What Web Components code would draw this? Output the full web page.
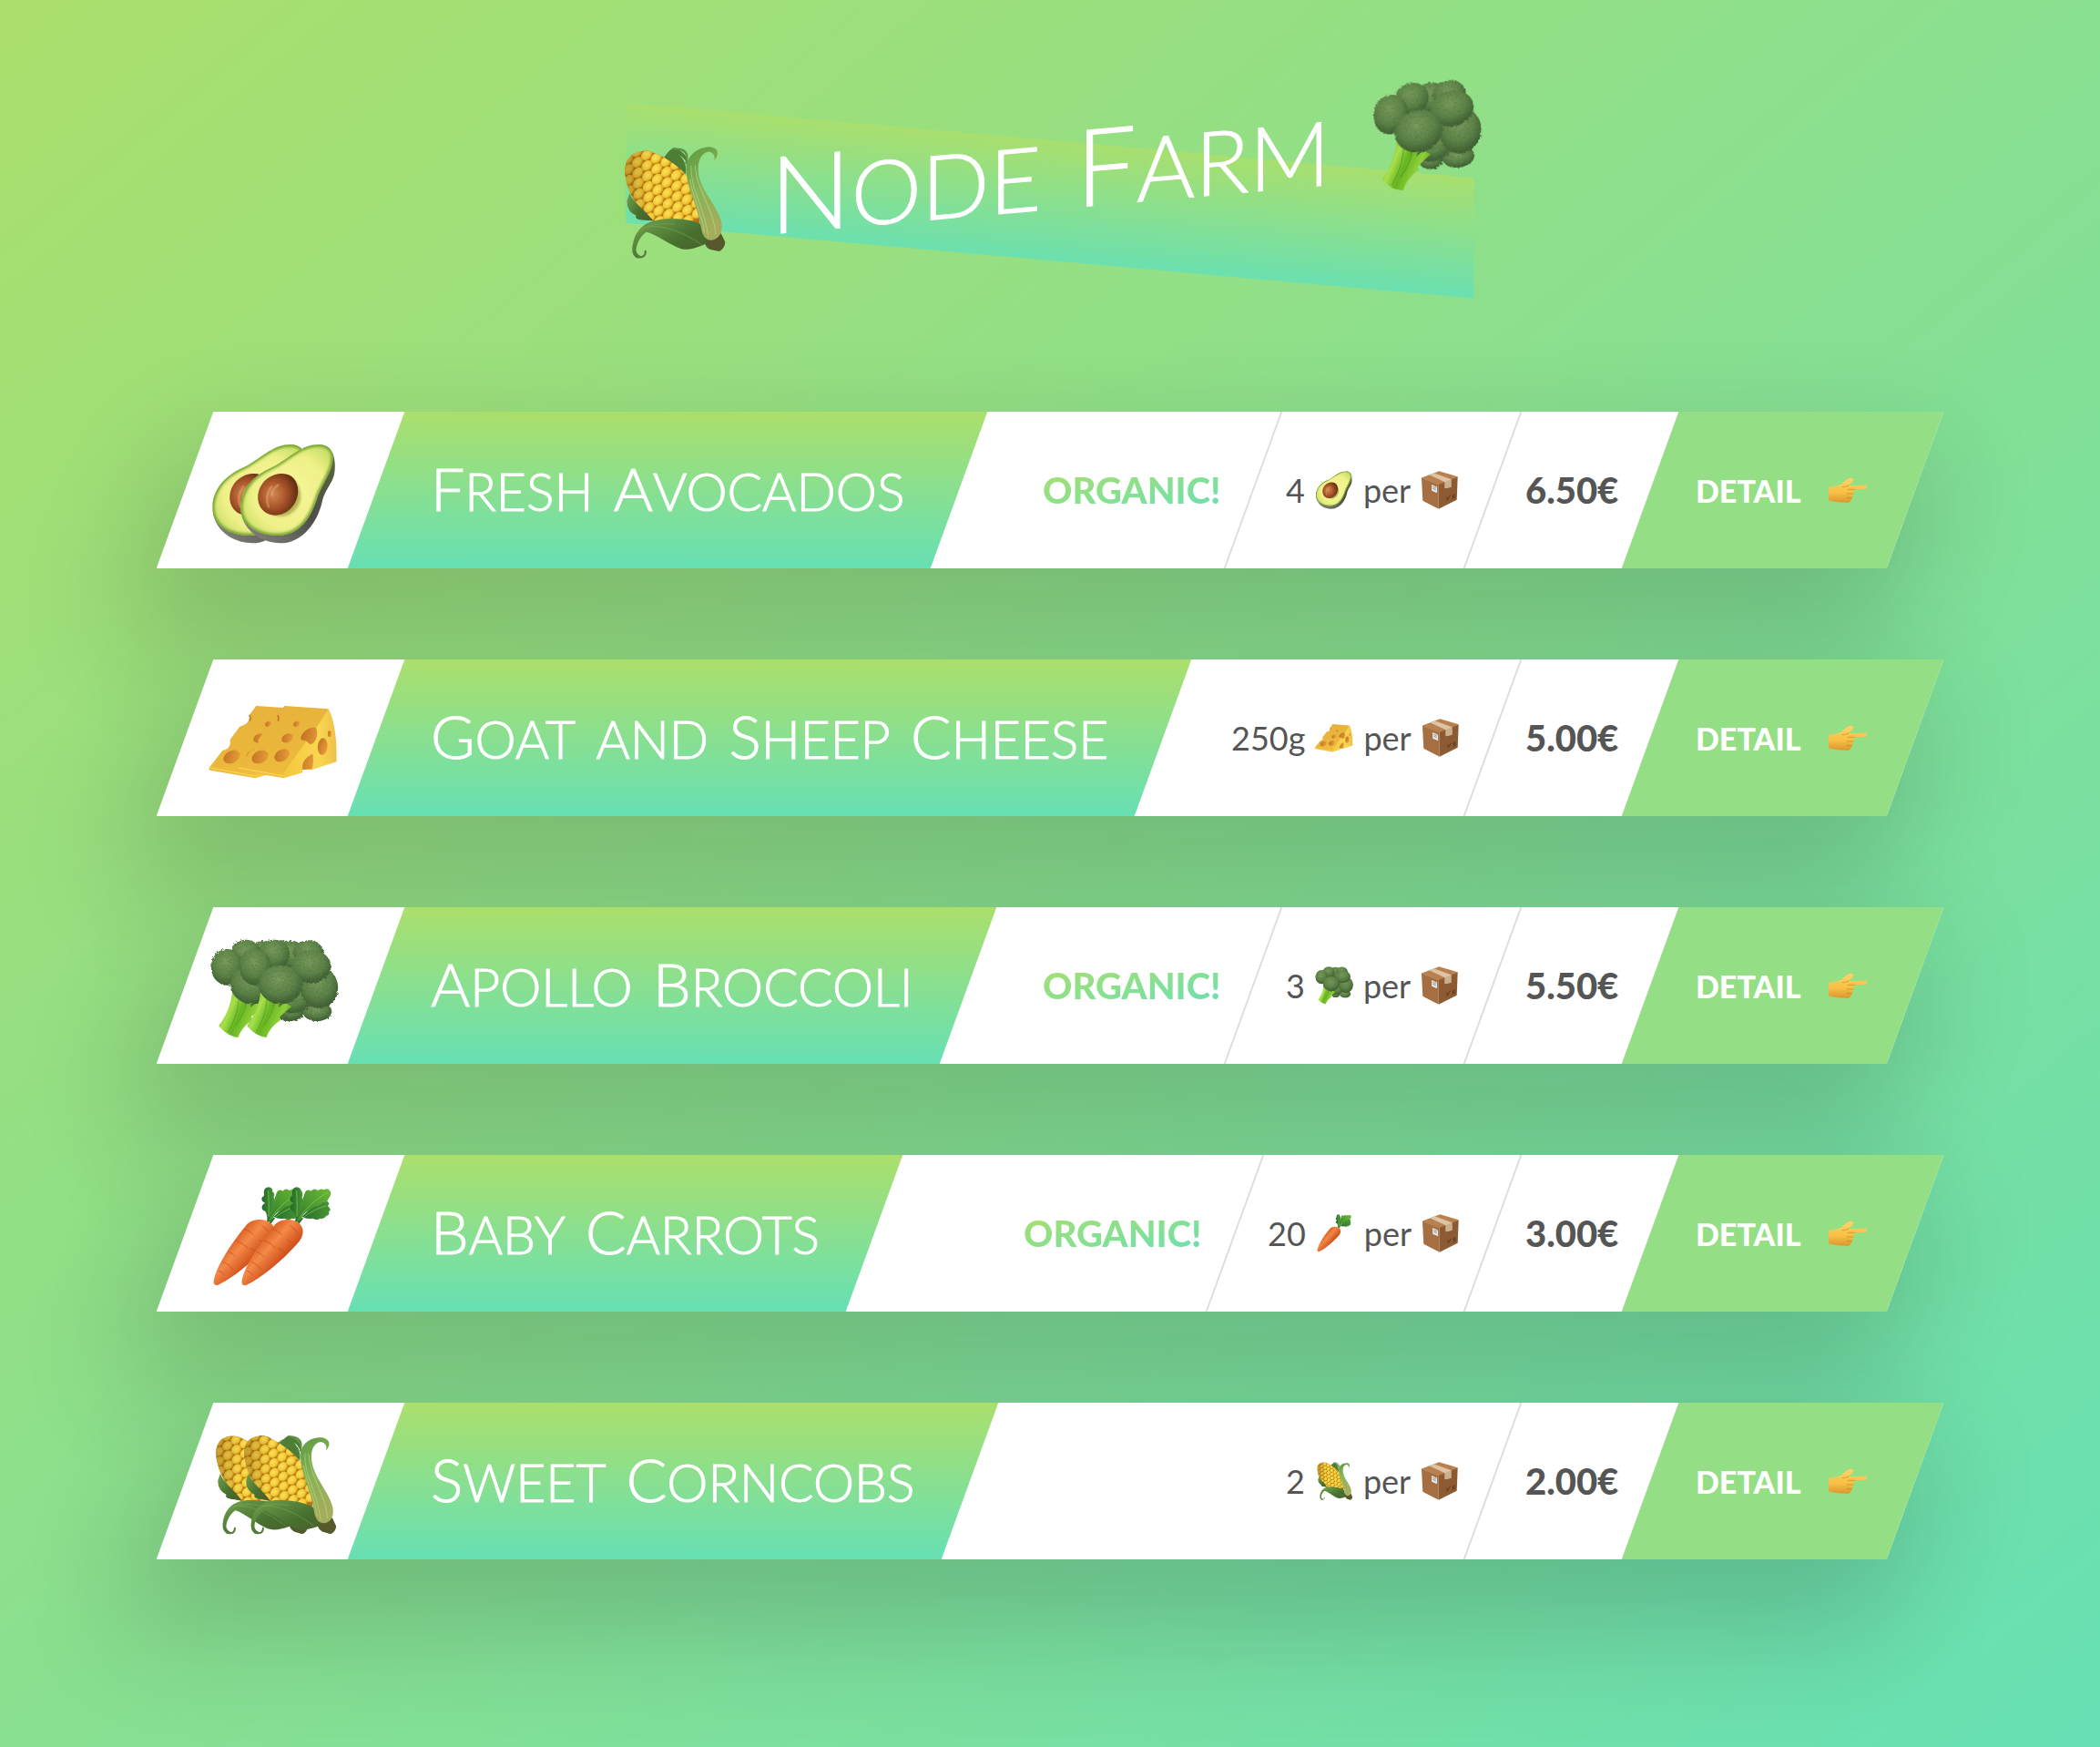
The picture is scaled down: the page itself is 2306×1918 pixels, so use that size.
<!DOCTYPE html>
<html lang="en">
<head>
<meta charset="utf-8">
<title>Node Farm</title>
<style>
  :root {
    --lime: #abdf6c;
    --mint: #67e0b4;
    --leaf: #94df86;
    --ink: #555;
  }
  body {
    margin: 0;
    min-height: 100vh;
    font-family: Lato, "Open Sans", sans-serif;
    font-size: 36px;
    color: var(--ink);
    background: linear-gradient(to bottom right, var(--lime), var(--mint));
  }
</style>
</head>
<body>
<farm-page>
  <farm-title slot="title"></farm-title>
  <product-card emoji="avocado" name="Fresh Avocados" quantity="4" price="6.50€" organic></product-card>
  <product-card emoji="cheese" name="Goat and Sheep Cheese" quantity="250g" price="5.00€"></product-card>
  <product-card emoji="broccoli" name="Apollo Broccoli" quantity="3" price="5.50€" organic></product-card>
  <product-card emoji="carrot" name="Baby Carrots" quantity="20" price="3.00€" organic></product-card>
  <product-card emoji="corn" name="Sweet Corncobs" quantity="2" price="2.00€"></product-card>
</farm-page>

<script>
const kernels = () => {
  let out = '';
  for (let r = -1; r < 11; r++) {
    for (let c = -1; c < 7; c++) {
      const u = c * 34 + (r % 2 ? 17 : 0) - 100, v = r * 27 - 135;
      const a = -35 * Math.PI / 180;
      const x = 262 + u * Math.cos(a) - v * Math.sin(a);
      const y = 165 + u * Math.sin(a) + v * Math.cos(a);
      out += `<ellipse cx="${x.toFixed(1)}" cy="${y.toFixed(1)}" rx="18" ry="15" transform="rotate(-38 ${x.toFixed(1)} ${y.toFixed(1)})" fill="url(#k)"/>`;
    }
  }
  return out;
};

const bump = (x, y, rx, ry) => `<ellipse cx="${x}" cy="${y}" rx="${rx}" ry="${ry}" fill="url(#b)"/>`;
const hole = (x, y, rx, ry, t) => `<ellipse cx="${x}" cy="${y}" rx="${rx}" ry="${ry}" transform="rotate(${t} ${x} ${y})" fill="url(#h)"/>`;

const EMOJI = {
  avocado: ['130 54 330 330', `
    <defs>
      <radialGradient id="f" gradientUnits="userSpaceOnUse" cx="300" cy="215" r="190"><stop offset="0" stop-color="#f8f79a"/><stop offset=".65" stop-color="#eef088"/><stop offset="1" stop-color="#c3dc62"/></radialGradient>
      <linearGradient id="s" x1="0" x2="1" y1="1" y2="0"><stop offset="0" stop-color="#8a8880"/><stop offset=".5" stop-color="#4f4d49"/><stop offset="1" stop-color="#5a6a3a"/></linearGradient>
      <radialGradient id="p" cx=".38" cy=".5" r=".62"><stop offset="0" stop-color="#d08a52"/><stop offset=".5" stop-color="#a9562a"/><stop offset="1" stop-color="#642c12"/></radialGradient>
      <filter id="o"><feGaussianBlur stdDeviation="5"/></filter>
      <clipPath id="c"><path d="M395 57C426 57 444 75 442 105C440 150 405 185 388 240C367 303 330 356 262 357C190 358 138 320 138 265C138 205 180 160 235 135C290 112 332 57 395 57Z"/></clipPath>
    </defs>
    <path fill="url(#s)" d="M400 58C440 62 452 95 448 145C444 185 417 200 406 248C390 315 340 382 270 382C200 380 152 340 140 285Z"/>
    <path fill="url(#f)" d="M395 57C426 57 444 75 442 105C440 150 405 185 388 240C367 303 330 356 262 357C190 358 138 320 138 265C138 205 180 160 235 135C290 112 332 57 395 57Z"/>
    <g clip-path="url(#c)"><path filter="url(#o)" fill="none" stroke="#6fa02f" stroke-width="13" d="M395 57C426 57 444 75 442 105C440 150 405 185 388 240C367 303 330 356 262 357C190 358 138 320 138 265C138 205 180 160 235 135C290 112 332 57 395 57Z"/>
    <ellipse filter="url(#o)" cx="270" cy="226" rx="66" ry="68" fill="#8c8a2c" opacity=".6"/></g>
    <path fill="url(#p)" d="M270 153C306 150 329 176 327 214C325 256 292 290 252 290C218 290 194 264 195 229C197 187 230 156 270 153Z"/>
    <path d="M240 196q-24 30-10 66M262 190q-20 14-22 34" fill="none" stroke="#f0b47c" stroke-width="8" opacity=".4" stroke-linecap="round"/>`],
  cheese: ['130 30 330 330', `
    <defs>
      <linearGradient id="t" x1=".3" y1="0" x2=".6" y2="1"><stop offset="0" stop-color="#e6b23c"/><stop offset=".6" stop-color="#eab73c"/><stop offset="1" stop-color="#f0bd3c"/></linearGradient>
      <linearGradient id="r" x1="0" x2="1"><stop offset="0" stop-color="#f3c53a"/><stop offset=".7" stop-color="#fad650"/><stop offset="1" stop-color="#eec04a"/></linearGradient>
      <linearGradient id="h" x1="0" x2="1" y1="0" y2=".5"><stop offset="0" stop-color="#bf6f20"/><stop offset="1" stop-color="#e49a38"/></linearGradient>
    </defs>
    <path fill="url(#r)" d="M427 88C446 120 457 190 454 262L374 288H342V298L280 316L262 300Z"/>
    <path fill="url(#t)" d="M282 78L427 88C400 140 330 225 280 304V316L130 290Q124 284 130 278L172 224C190 222 200 208 196 190L228 146C246 142 264 130 260 108Z"/>
    <path d="M427 89C400 140 330 225 281 304" fill="none" stroke="#f6cc50" stroke-width="3"/>
    <path d="M130 282L280 309" stroke="#f8d052" stroke-width="4"/>
    <path d="M260 108q6 10 1 20" stroke="#c47a26" stroke-width="5" fill="none"/>
    ${hole(322, 137, 11, 8, -38)}${hole(292, 184, 20, 14, -28)}${hole(274, 241, 27, 19, -32)}${hole(202, 246, 29, 20, -28)}
    ${hole(408, 212, 16, 28, 5)}${hole(431, 170, 6, 10, 0)}
    <path fill="url(#h)" d="M336 182C344 158 368 146 386 150C394 166 390 196 372 204C362 206 358 192 350 192C342 194 336 190 336 182ZM342 288V272C345 256 360 242 376 236Q380 260 374 286Z"/>`],
  broccoli: ['130 66 330 330', `
    <defs>
      <radialGradient id="b" cx=".45" cy=".35" r=".64"><stop offset="0" stop-color="#7a9c5c"/><stop offset=".6" stop-color="#5d8248"/><stop offset="1" stop-color="#3c5c31"/></radialGradient>
      <linearGradient id="m" x1="0" x2="1" y1=".2" y2=".7"><stop offset="0" stop-color="#5fae1f"/><stop offset=".3" stop-color="#a8e04c"/><stop offset=".5" stop-color="#66b422"/><stop offset=".75" stop-color="#8fd038"/><stop offset="1" stop-color="#4a9018"/></linearGradient>
      <filter id="x" x="-5%" y="-5%" width="110%" height="110%"><feTurbulence type="fractalNoise" baseFrequency=".16" numOctaves="2" result="n"/><feDisplacementMap in="SourceGraphic" in2="n" scale="12" result="d"/><feColorMatrix in="n" values="0 0 0 0 .08 0 0 0 0 .16 0 0 0 0 .05 1.4 0 0 0 -.6"/><feComposite in2="d" operator="in"/><feMerge><feMergeNode in="d"/><feMergeNode/></feMerge></filter>
    </defs>
    <g filter="url(#x)"><path fill="#3c5c31" d="M215 90L390 90L430 180L425 260L350 285L280 270L180 190Z"/>${bump(308, 302, 38, 32)}${bump(390, 304, 48, 32)}${bump(310, 262, 62, 48)}</g>
    <path fill="url(#m)" d="M204 226C204 280 180 325 159 352Q186 386 223 390C232 362 252 345 270 332L267 322L306 288L284 276L262 292L276 262L240 240Z"/>
    <path d="M225 262C222 310 205 345 190 372M250 272C246 300 232 330 214 350" fill="none" stroke="#3f8a14" stroke-width="3" opacity=".5"/>
    <g filter="url(#x)">${bump(305, 118, 54, 46)}${bump(362, 112, 50, 42)}${bump(397, 226, 62, 68)}${bump(370, 156, 66, 54)}${bump(248, 116, 52, 48)}${bump(186, 158, 52, 60)}${bump(270, 216, 72, 64)}</g>`],
  carrot: ['130 42 330 330', `
    <defs>
      <linearGradient id="a" gradientUnits="userSpaceOnUse" x1="205" y1="225" x2="270" y2="285"><stop offset="0" stop-color="#e0672a"/><stop offset=".35" stop-color="#f48a48"/><stop offset="1" stop-color="#cf4f1a"/></linearGradient>
      <linearGradient id="g" x1="0" x2="1" y1="1" y2="0"><stop offset="0" stop-color="#2f7a2a"/><stop offset="1" stop-color="#6cbb38"/></linearGradient>
      <linearGradient id="d" x1="0" x2="1"><stop offset="0" stop-color="#22672a"/><stop offset="1" stop-color="#4a9636"/></linearGradient>
    </defs>
    <path fill="url(#d)" d="M326 160C345 130 385 98 408 88Q424 84 430 98Q422 104 430 110Q438 118 428 124Q434 134 420 138Q412 150 400 146Q388 154 376 146Q356 150 340 140Z"/>
    <path fill="url(#g)" d="M324 156C332 120 340 90 350 60Q358 48 370 56Q380 44 392 54Q404 46 412 52Q428 44 434 58Q438 70 428 80Q424 94 408 94Q398 106 384 106Q366 118 352 126Q338 138 330 160Z"/>
    <path fill="url(#d)" d="M320 156C318 140 318 130 312 122Q298 118 302 104Q306 98 312 96Q296 88 302 76Q310 74 308 64Q306 46 322 43Q338 44 336 58Q346 64 340 76Q346 86 340 96Q344 108 334 118Q328 134 326 158Z"/>
    <path d="M323 154Q326 100 322 54M326 152Q360 98 424 60M330 156Q366 120 420 104" fill="none" stroke="#8ed055" stroke-width="3" opacity=".65"/>
    <path d="M318 162L326 140M327 164L342 144" stroke="#2a6f2c" stroke-width="6"/>
    <path fill="url(#a)" d="M142 353C148 312 190 240 250 168C266 148 306 144 328 160C350 176 348 206 324 230C270 290 205 342 156 366Q141 368 142 353Z"/>
    <path d="M242 180q20 8 32 20M300 168q16 12 26 26M214 218q26 10 40 26M262 244q14 6 24 16M190 256q16 6 24 16M172 288q20 8 34 26M158 318q12 4 20 14M290 216q12 6 20 14" fill="none" stroke="#c24a18" stroke-width="3" opacity=".65"/>`],
  corn: ['130 48 330 330', `
    <defs>
      <radialGradient id="k" cx=".45" cy=".38" r=".62"><stop offset="0" stop-color="#fce35a"/><stop offset=".65" stop-color="#f2c936"/><stop offset="1" stop-color="#c48a1c"/></radialGradient>
      <linearGradient id="q" x1="0" x2="1"><stop offset="0" stop-color="#5a2c00" stop-opacity=".4"/><stop offset=".35" stop-color="#5a2c00" stop-opacity="0"/></linearGradient>
      <linearGradient id="l" x1="0" x2=".3" y1="0" y2="1"><stop offset="0" stop-color="#5d9a3f"/><stop offset=".5" stop-color="#86b356"/><stop offset="1" stop-color="#a3ad5c"/></linearGradient>
      <linearGradient id="w" x1="0" x2="1" y1=".2" y2="1"><stop offset="0" stop-color="#6a9a48"/><stop offset=".5" stop-color="#46702f"/><stop offset="1" stop-color="#4d5a2a"/></linearGradient>
      <clipPath id="z"><path d="M150 112C148 68 180 46 222 54C290 82 345 135 376 200V294L240 272C190 232 154 172 150 112Z"/></clipPath>
    </defs>
    <path fill="#4e7d35" d="M264 86Q276 62 296 51C322 62 342 78 338 106Q334 88 314 74C334 96 336 116 333 134C312 112 290 96 264 86Z"/>
    <path d="M296 54Q334 56 337 78Q338 92 334 104" fill="none" stroke="#5e8f45" stroke-width="6"/>
    <g clip-path="url(#z)"><path fill="#b37416" d="M140 40h250v270h-250z"/>${kernels()}<path fill="url(#q)" d="M140 40h250v270h-250z"/></g>
    <path fill="url(#w)" d="M164 176C174 205 206 226 236 266L210 262Q176 258 184 246Q156 232 156 200Z"/>
    <path fill="url(#w)" d="M186 374Q168 364 173 335C180 290 210 264 262 264C320 264 366 276 384 294C400 316 430 330 452 352Q450 368 436 375L408 368Q396 362 392 350C370 358 342 366 320 358C280 340 240 304 214 298C192 312 182 340 184 354Q188 368 206 372Z"/>
    <path d="M186 371Q212 378 212 356" fill="none" stroke="#557d38" stroke-width="6" stroke-linecap="round"/>
    <path d="M210 284C260 276 330 310 380 350M190 300C206 280 240 272 300 282" fill="none" stroke="#84ac5a" stroke-width="3" opacity=".45"/>
    <path fill="#57592c" d="M398 346Q420 330 440 322L453 350Q448 370 434 375Q408 372 398 346Z"/>
    <path fill="url(#l)" d="M335 124C332 84 364 54 408 58C432 64 436 82 420 100Q424 78 404 72C378 74 368 100 372 136C380 190 424 230 440 282C448 312 438 338 412 340C388 338 382 316 378 290C366 226 338 176 335 124Z"/>
    <path d="M350 110C346 180 392 240 402 330M362 110C364 180 420 250 424 324M346 150C356 210 384 260 390 316" fill="none" stroke="#d3dd93" stroke-width="3" opacity=".5"/>`],
  box: ['476 47 128 128', `
    <path fill="#b9814f" d="M479 70L538 48L600 66L537 94Z"/>
    <path fill="#a56f41" d="M479 70L536 93V174L483 147Z"/>
    <path fill="#8c5a33" d="M600 66L536 93V174L597 144Z"/>
    <path fill="#dcc4a4" d="M504 60L520 54L578 75V101L557 106V84Z"/>
    <path fill="#c9b08e" d="M557 84L578 75V101L557 106Z"/>
    <path fill="#e9e6e2" d="M513 93L531 101V121L513 113Z"/>
    <path d="M517 100l10 4M517 106l10 4" stroke="#7f93a8" stroke-width="3"/>
    <path d="M561 134l6 6 8-11M565 139v6M584 127v14M589 124v14" fill="none" stroke="#5b371b" stroke-width="3"/>`],
  hand: ['530 40 132 132', `
    <defs><linearGradient id="y" x1="0" x2="0" y1="0" y2="1"><stop offset="0" stop-color="#ffd462"/><stop offset=".6" stop-color="#f6c048"/><stop offset="1" stop-color="#dd962c"/></linearGradient></defs>
    <path fill="url(#y)" d="M534 97C548 92 562 94 572 88C586 80 594 66 606 66Q616 66 614 76C610 82 602 86 598 91L655 90Q661 92 660 98Q659 103 652 103L618 104Q618 112 614 118Q614 128 609 132Q607 146 596 147L560 146Q546 140 535 142Q529 118 534 97Z"/>
    <path d="M598 91Q588 98 578 96M618 104L596 104M614 118L594 118M609 132L592 131" fill="none" stroke="#c98424" stroke-width="3" stroke-linecap="round" opacity=".7"/>`]
};

class FarmEmoji extends HTMLElement {
  connectedCallback() {
    const [box, art] = EMOJI[this.getAttribute('name')];
    this.attachShadow({ mode: 'open' }).innerHTML = `
      <style>
        :host { display: inline-block; width: var(--emoji, 42px); height: var(--emoji, 42px); flex: none; }
        svg { display: block; width: 100%; height: 100%; overflow: visible; }
      </style>
      <svg viewBox="${box}" aria-hidden="true">${art}</svg>`;
  }
}
customElements.define('farm-emoji', FarmEmoji);

/* Display lettering: tall initials over slightly shorter small capitals. */
class FarmLettering extends HTMLElement {
  connectedCallback() {
    const words = this.getAttribute('text').split(' ')
      .map(w => `<span class="${/^[A-Z]/.test(w) ? 'initial' : ''}">${w}</span>`).join(' ');
    this.attachShadow({ mode: 'open' }).innerHTML = `
      <style>
        :host { display: block; padding-bottom: 18px; white-space: nowrap; font-weight: 300; font-variant-caps: small-caps; font-size: var(--small, 82px); line-height: 1; color: #fff; -webkit-text-stroke: 1px #fff; }
        span { display: inline-block; }
        .initial::first-letter { font-size: var(--initial, 66px); }
      </style>${words}`;
  }
}
customElements.define('farm-lettering', FarmLettering);

class FarmTitle extends HTMLElement {
  connectedCallback() {
    this.attachShadow({ mode: 'open' }).innerHTML = `
      <style>
        :host { display: block; }
        h1 { position: relative; display: flex; align-items: center; justify-content: center; gap: 46px; height: 200px; margin: 0; transform: skewY(-5deg); --emoji: 120px; }
        h1::before { content: ""; position: absolute; z-index: -1; left: 50%; top: 50%; width: 49%; height: 132px; margin-top: 35px; transform: translate(-50%, -50%) skewY(10deg); background: linear-gradient(to bottom, var(--lime), var(--mint)); opacity: .9; }
        farm-lettering { --small: 140px; --initial: 118px; }
      </style>
      <h1><farm-emoji name="corn"></farm-emoji><farm-lettering text="Node Farm"></farm-lettering><farm-emoji name="broccoli"></farm-emoji></h1>`;
  }
}
customElements.define('farm-title', FarmTitle);

class ProductCard extends HTMLElement {
  connectedCallback() {
    const get = n => this.getAttribute(n);
    const pic = `<farm-emoji name="${get('emoji')}"></farm-emoji>`;
    const organic = this.hasAttribute('organic') ? '<div class="cell"><strong class="organic">Organic!</strong></div>' : '';
    this.attachShadow({ mode: 'open' }).innerHTML = `
      <style>
        * { box-sizing: border-box; }
        :host { display: block; }
        article { display: flex; height: 172px; background: #fff; transform: skewX(-20deg); box-shadow: 0 60px 120px 20px rgba(0, 0, 0, .16); }
        .pictures, h2, .cell, a { display: flex; align-items: center; flex: none; }
        .pictures > *, h2 > *, .cell > *, a > * { transform: skewX(20deg); }
        .pictures { width: 210px; padding: 8px 0 0 29px; --emoji: 110px; }
        .pictures farm-emoji + farm-emoji { margin-left: -79px; }
        h2 { margin: 0; padding: 0 60px; background: linear-gradient(to bottom, var(--lime), var(--mint)); }
        .details { display: flex; flex: 1; justify-content: flex-end; }
        .cell { padding: 0 35px; }
        .cell + .cell { border-left: 2px solid #ddd; }
        .quantity { display: flex; align-items: center; gap: 11px; margin: 0; line-height: 48px; }
        strong { font-weight: 900; font-size: 40px; }
        .organic { text-transform: uppercase; color: transparent; background: linear-gradient(to bottom right, var(--lime), var(--mint)); background-clip: text; }
        a { width: 291px; padding-left: 50px; background: var(--leaf); color: #fff; font-weight: 900; font-size: 34px; text-decoration: none; text-transform: uppercase; --emoji: 44px; }
        a > span { display: flex; align-items: center; gap: 30px; }
      </style>
      <article>
        <div class="pictures">${pic}${pic}</div>
        <h2><farm-lettering text="${get('name')}"></farm-lettering></h2>
        <div class="details">
          ${organic}
          <div class="cell"><p class="quantity"><span>${get('quantity')}</span>${pic}<span>per</span><farm-emoji name="box"></farm-emoji></p></div>
          <div class="cell"><strong>${get('price')}</strong></div>
        </div>
        <a href="#${get('emoji')}"><span><span>Detail</span><farm-emoji name="hand"></farm-emoji></span></a>
      </article>`;
  }
}
customElements.define('product-card', ProductCard);

class FarmPage extends HTMLElement {
  connectedCallback() {
    this.attachShadow({ mode: 'open' }).innerHTML = `
      <style>
        :host { display: block; width: 1900px; max-width: 90%; margin: 0 auto; padding: 85px 0 200px; }
        main { display: flex; flex-direction: column; gap: 100px; margin-top: 167px; }
      </style>
      <slot name="title"></slot>
      <main><slot></slot></main>`;
  }
}
customElements.define('farm-page', FarmPage);
</script>
</body>
</html>
